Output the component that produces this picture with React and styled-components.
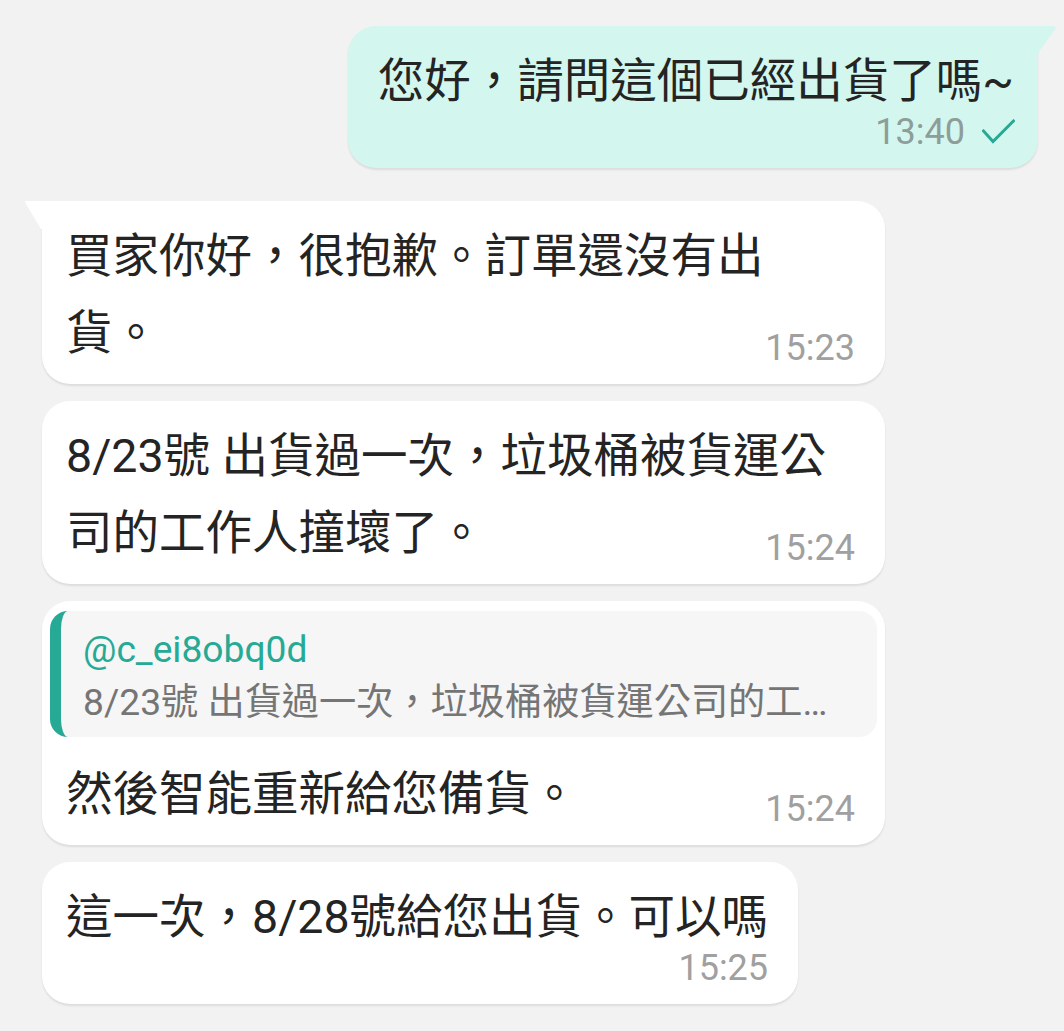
import React from "react";
import styled, { createGlobalStyle, css } from "styled-components";

const GlobalStyle = createGlobalStyle`
  html, body {
    margin: 0;
    padding: 0;
    background: #f2f2f2;
  }
  body {
    font-family: Roboto, "Noto Sans CJK TC", sans-serif;
  }
`;

const Chat = styled.div`
  display: flex;
  flex-direction: column;
  gap: 17px;
  padding: 26px 0 40px;
  box-sizing: border-box;
  min-height: 1031px;
`;

const Row = styled.div`
  display: flex;
  justify-content: ${(p) => (p.$out ? "flex-end" : "flex-start")};
  padding: ${(p) => (p.$out ? "0 26px 0 0" : "0 0 0 42px")};
  margin-top: ${(p) => (p.$groupStart ? "16px" : "0")};
`;

const Bubble = styled.div`
  position: relative;
  max-width: 843px;
  box-sizing: border-box;
  background: ${(p) => (p.$out ? "#d3f6ef" : "#ffffff")};
  border-radius: 28px;
  box-shadow: 0 2px 2px rgba(0, 0, 0, 0.09);
  padding-bottom: 18px;

  ${(p) =>
    p.$tail &&
    !p.$out &&
    css`
      border-top-left-radius: 0;
      &::before {
        content: "";
        position: absolute;
        top: 0;
        left: -17px;
        width: 17px;
        height: 28px;
        background: #ffffff;
        clip-path: polygon(0 0, 100% 0, 100% 100%, calc(100% - 1px) 100%, 1px 3px);
      }
    `}

  ${(p) =>
    p.$tail &&
    p.$out &&
    css`
      border-top-right-radius: 0;
      &::after {
        content: "";
        position: absolute;
        top: 0;
        right: -18px;
        width: 18px;
        height: 27px;
        background: #d3f6ef;
        clip-path: polygon(0 0, calc(100% - 2px) 0, 100% 2px, 0 100%);
      }
    `}
`;

const Text = styled.div`
  font-size: 46.5px;
  line-height: 77px;
  color: #242424;
  padding: 17px ${(p) => (p.$out ? "24px" : "30px")} 0
    ${(p) => (p.$out ? "30px" : "24px")};
  line-break: strict;
`;

const Meta = styled.div`
  display: flex;
  justify-content: flex-end;
  align-items: center;
  gap: 17px;
  font-size: 36px;
  line-height: 36px;
  color: ${(p) => (p.$out ? "#8d9d99" : "#a0a0a0")};
  padding-right: ${(p) => (p.$out ? "23px" : "30px")};
  margin-top: ${(p) => (p.$inline ? "-42px" : "-6px")};
`;

const Tick = styled.svg`
  width: 33px;
  height: 26px;
  flex: none;
`;

const Quote = styled.div`
  margin: 10px 8px 2px;
  background: #f6f6f6;
  border-left: 11px solid #26a995;
  border-radius: 18px;
  padding: 13px 30px 10px 22px;
  min-width: 0;
  overflow: hidden;
`;

const QuoteName = styled.div`
  color: #26a995;
  font-size: 37.2px;
  line-height: 50px;
`;

const QuoteText = styled.div`
  color: #757575;
  font-size: 37.2px;
  line-height: 50px;
  margin-top: 3px;
  white-space: nowrap;
  overflow: hidden;
  text-overflow: ellipsis;
`;

const CheckIcon = () => (
  <Tick viewBox="0 0 33 26">
    <polyline
      points="1.5,12 11,22.5 31.5,2"
      fill="none"
      stroke="#26a995"
      strokeWidth="3"
      strokeLinecap="square"
    />
  </Tick>
);

const messages = [
  {
    out: true,
    tail: true,
    text: "您好，請問這個已經出貨了嗎~",
    time: "13:40",
    inline: false,
  },
  {
    out: false,
    tail: true,
    groupStart: true,
    text: "買家你好，很抱歉。訂單還沒有出貨。",
    time: "15:23",
    inline: true,
  },
  {
    out: false,
    text: "8/23號 出貨過一次，垃圾桶被貨運公司的工作人撞壞了。",
    time: "15:24",
    inline: true,
  },
  {
    out: false,
    quote: {
      name: "@c_ei8obq0d",
      text: "8/23號 出貨過一次，垃圾桶被貨運公司的工作人撞壞了。",
    },
    text: "然後智能重新給您備貨。",
    time: "15:24",
    inline: true,
  },
  {
    out: false,
    text: "這一次，8/28號給您出貨。可以嗎",
    time: "15:25",
    inline: false,
  },
];

export default function App() {
  return (
    <>
      <GlobalStyle />
      <Chat>
        {messages.map((m, i) => (
          <Row key={i} $out={m.out} $groupStart={m.groupStart}>
            <Bubble $out={m.out} $tail={m.tail}>
              {m.quote && (
                <Quote>
                  <QuoteName>{m.quote.name}</QuoteName>
                  <QuoteText>{m.quote.text}</QuoteText>
                </Quote>
              )}
              <Text $out={m.out}>{m.text}</Text>
              <Meta $out={m.out} $inline={m.inline}>
                <span>{m.time}</span>
                {m.out && <CheckIcon />}
              </Meta>
            </Bubble>
          </Row>
        ))}
      </Chat>
    </>
  );
}
